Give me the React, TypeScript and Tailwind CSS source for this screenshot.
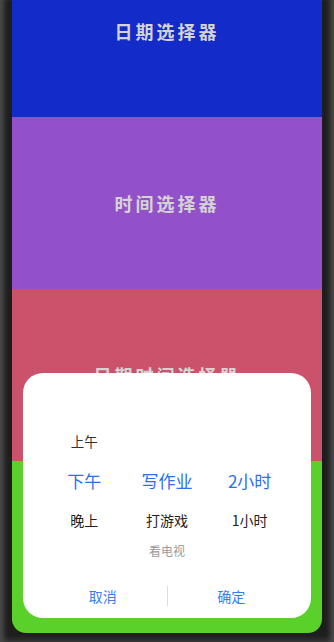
const sections = [
  { title: "日期选择器", bg: "bg-[#132bc8]" },
  { title: "时间选择器", bg: "bg-[#9351c9]" },
  { title: "日期时间选择器", bg: "bg-[#cb526b]" },
  { title: "", bg: "bg-[#5ad02a]" },
];

const columns = [
  { above: "上午", selected: "下午", below: "晚上", far: "" },
  { above: "", selected: "写作业", below: "打游戏", far: "看电视" },
  { above: "", selected: "2小时", below: "1小时", far: "" },
];

function PickerColumn({ above, selected, below, far }: (typeof columns)[number]) {
  return (
    <div className="flex flex-col items-center">
      <div className="flex h-10 items-center text-[13.5px] text-[#333]">{above}</div>
      <div className="flex h-10 items-center text-[17px] text-[#2d6ef0]">{selected}</div>
      <div className="flex h-[38px] items-center text-[14px] text-[#222]">{below}</div>
      <div className="flex h-6 items-center text-[12px] text-[#9a9a9a]">{far}</div>
    </div>
  );
}

export default function App() {
  return (
    <div
      className="h-[642px] w-[334px] overflow-hidden bg-[#1e1e1e] px-3 pb-[9px] shadow-[inset_7px_0_5px_-3px_#4a4a4a,inset_-7px_0_5px_-3px_#4a4a4a,inset_0_-6px_5px_-3px_#3a3a3a]"
      style={{ fontFamily: '"Noto Sans CJK SC", "Noto Sans", sans-serif' }}
    >
      <div className="relative h-full overflow-hidden rounded-b-[14px]">
        {/* Scrolled list of picker entries */}
        <div className="-mt-[55px] flex flex-col">
          {sections.map((s, i) => (
            <div key={i} className={`flex h-[172px] items-center justify-center ${s.bg}`}>
              <span className="text-[18px] font-bold tracking-[3px] text-[#d4d4d4]">{s.title}</span>
            </div>
          ))}
        </div>

        {/* Picker dialog */}
        <div className="absolute bottom-[15px] left-[11px] right-[11px] flex h-[245px] flex-col rounded-[20px] bg-white pt-12">
          <div className="grid grid-cols-3 px-5">
            {columns.map((c, i) => (
              <PickerColumn key={i} {...c} />
            ))}
          </div>
          <div className="mt-[11px] flex h-11 items-center px-4 text-[14px] text-[#3a7bf0]">
            <button className="flex-1">取消</button>
            <div className="h-5 w-px bg-[#dcdcdc]" />
            <button className="flex-1">确定</button>
          </div>
        </div>
      </div>
    </div>
  );
}
